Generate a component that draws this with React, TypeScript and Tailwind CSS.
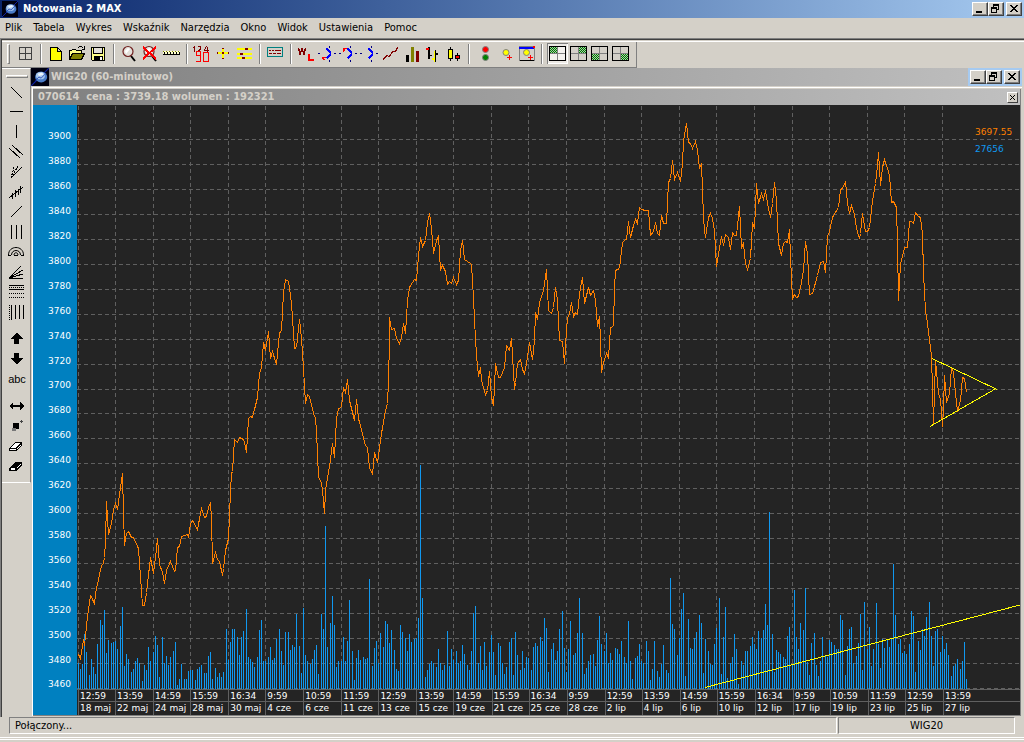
import type { ReactNode } from 'react';
import clsx from 'clsx';

const MENU = ['Plik', 'Tabela', 'Wykres', 'Wskaźnik', 'Narzędzia', 'Okno', 'Widok', 'Ustawienia', 'Pomoc'];

// plot canvas
const LEFT = 77;
const TOP = 105;
const WIDTH = 943;
const HEIGHT = 584;
const BASE = 689;

const BARS_PER_TICK = 17;
const TICKS = [
  ['12:59', '18 maj'], ['13:59', '22 maj'], ['14:59', '24 maj'], ['15:59', '28 maj'],
  ['16:34', '30 maj'], ['9:59', '4 cze'], ['10:59', '6 cze'], ['11:59', '11 cze'],
  ['12:59', '13 cze'], ['13:59', '15 cze'], ['14:59', '19 cze'], ['15:59', '21 cze'],
  ['16:34', '25 cze'], ['9:59', '28 cze'], ['12:59', '2 lip'], ['13:59', '4 lip'],
  ['14:59', '6 lip'], ['15:59', '10 lip'], ['16:34', '12 lip'], ['9:59', '17 lip'],
  ['10:59', '19 lip'], ['11:59', '23 lip'], ['12:59', '25 lip'], ['13:59', '27 lip'],
];

const barX = (i: number) => 78 + Math.floor((i * 42) / 19);
const TICK_X = TICKS.map((_, i) => barX(i * BARS_PER_TICK));
const LEVELS = Array.from({ length: 23 }, (_, i) => ({
  price: 3900 - i * 20,
  y: i < 11 ? 139 + i * 25 : 138 + i * 25,
}));

const VOLUME = [
  26, 20, 25, 55, 37, 14, 30, 22, 15, 45, 69, 64, 79, 36, 49, 46, 47,
  48, 40, 63, 82, 23, 35, 30, 17, 20, 28, 31, 26, 8, 24, 19, 42, 28,
  37, 53, 44, 12, 52, 26, 33, 24, 32, 38, 47, 4, 10, 25, 10, 10, 18,
  19, 19, 9, 20, 22, 24, 16, 16, 33, 37, 10, 21, 12, 16, 12, 17, 60,
  29, 47, 60, 60, 52, 34, 52, 58, 80, 32, 30, 27, 22, 32, 59, 69, 28,
  28, 32, 42, 29, 31, 50, 60, 38, 24, 57, 57, 39, 44, 42, 75, 43, 16,
  81, 34, 28, 25, 30, 39, 44, 15, 75, 60, 163, 42, 66, 93, 64, 22, 28,
  28, 52, 28, 48, 89, 38, 9, 31, 39, 29, 32, 30, 31, 110, 23, 41, 48,
  26, 56, 42, 68, 65, 46, 59, 39, 20, 18, 64, 57, 51, 38, 55, 47, 50,
  51, 71, 224, 91, 12, 19, 25, 28, 26, 22, 40, 26, 19, 24, 58, 23, 40,
  29, 38, 26, 28, 44, 35, 24, 19, 38, 76, 83, 26, 43, 19, 47, 23, 37,
  54, 37, 14, 46, 43, 26, 15, 22, 47, 51, 14, 57, 34, 19, 38, 21, 32,
  31, 19, 42, 46, 43, 52, 48, 71, 61, 17, 40, 46, 29, 38, 60, 78, 41,
  17, 40, 68, 34, 36, 56, 91, 56, 15, 21, 28, 34, 35, 23, 49, 73, 45,
  38, 56, 26, 36, 29, 41, 40, 35, 48, 32, 26, 68, 28, 10, 31, 33, 45,
  28, 26, 48, 38, 9, 20, 48, 18, 12, 25, 44, 19, 16, 111, 65, 60, 34,
  51, 80, 96, 13, 70, 41, 40, 51, 57, 74, 66, 16, 50, 38, 25, 24, 45,
  61, 91, 15, 52, 82, 11, 26, 32, 55, 40, 5, 28, 24, 38, 38, 43, 52,
  45, 40, 58, 51, 59, 85, 64, 177, 55, 17, 39, 37, 35, 32, 30, 53, 62,
  24, 99, 52, 40, 66, 59, 101, 27, 14, 46, 56, 24, 13, 28, 52, 33, 32,
  49, 47, 44, 40, 40, 74, 69, 14, 43, 60, 62, 26, 33, 46, 75, 19, 87,
  40, 62, 23, 40, 86, 45, 21, 50, 41, 49, 42, 50, 125, 74, 45, 50, 36,
  38, 35, 45, 78, 73, 17, 48, 39, 60, 53, 72, 87, 53, 23, 58, 60, 37,
  53, 40, 46, 34, 13, 23, 25, 30, 20, 28, 47, 10,
];

const PRICE =
  '78,654 80,658 83,639 84,645 87,616 90,595 91,596 94,604 95,593 101,565 103,563 104,557 105,540 106,501 108,534 111,523 113,509 115,503 117,509 120,487 122,473 123,512 124,545 126,533 128,531 131,537 133,537 138,548 139,562 142,605 144,605 146,592 150,557 153,573 155,557 157,538 159,564 162,572 164,583 166,570 170,561 174,571 175,570 177,547 179,546 181,536 184,535 187,534 188,537 190,523 192,520 197,529 201,508 204,517 206,516 208,507 210,502 211,518 212,563 215,552 217,559 219,561 222,575 223,568 225,550 228,538 229,515 ' +
  '230,490 231,473 232,471 234,439 237,442 239,437 243,439 245,446 246,452 248,418 250,416 252,417 257,397 259,373 261,367 263,342 265,350 268,331 270,358 272,351 276,364 279,332 281,331 283,292 285,279 288,281 289,287 291,303 294,348 296,347 299,319 301,338 303,368 305,403 307,394 309,396 313,413 315,418 316,430 318,477 321,482 322,490 324,513 325,490 327,477 329,466 332,443 334,457 336,418 338,408 341,407 343,387 345,392 347,379 349,400 354,420 356,399 358,418 365,445 367,447 369,467 372,474 374,452 377,462 378,455 381,433 385,410 387,403 388,380 389,340 389,317 391,329 394,328 396,338 399,343 401,337 403,323 405,333 407,300 409,287 412,282 414,279 416,280 418,255 420,237 422,246 425,240 427,222 429,213 431,228 433,253 436,240 438,236 440,269 442,265 445,271 447,284 449,281 451,283 453,277 456,284 458,280 460,250 462,240 464,259 467,261 470,263 471,264 473,297 474,320 476,355 478,376 480,367 481,380 485,394 487,390 489,371 491,397 493,405 494,387 495,363 498,377 500,377 504,367 506,345 509,350 511,338 514,389 515,382 517,363 ' +
  '520,359 522,369 524,373 526,363 529,342 532,359 534,340 535,312 537,319 539,302 543,290 546,269 548,310 551,313 553,307 555,287 557,300 559,340 562,341 564,363 566,330 567,318 569,313 571,302 573,316 575,312 577,314 579,293 582,277 584,303 588,287 590,295 593,290 595,300 597,326 599,316 600,340 601,372 603,362 606,353 608,357 610,327 613,326 614,287 615,270 619,268 622,242 625,239 626,239 628,221 630,237 633,225 635,219 637,223 639,207 641,209 645,210 648,210 650,235 653,231 655,222 657,233 659,235 661,215 663,223 666,223 668,182 670,178 672,160 674,179 677,172 680,181 682,163 683,140 686,123 688,142 690,143 692,148 695,141 697,150 699,168 701,163 703,217 704,230 705,237 708,217 710,213 712,218 714,230 716,266 718,253 721,236 723,245 725,234 728,237 730,249 732,232 734,235 736,235 739,206 741,247 743,243 745,263 747,269 750,258 752,223 754,227 755,207 ' +
  '756,183 758,203 761,193 763,199 765,190 767,203 770,217 772,203 774,182 776,200 778,243 781,255 783,243 785,241 787,242 789,229 790,257 792,298 794,294 796,297 798,296 801,282 803,270 805,241 807,253 809,294 812,293 817,275 820,262 823,261 825,272 827,236 829,231 832,217 838,207 840,189 842,188 845,181 847,203 849,213 851,205 854,214 856,228 859,238 860,233 862,213 865,231 867,231 869,227 872,200 875,183 877,165 878,152 879,168 880,185 882,167 884,159 887,168 889,175 891,202 893,201 896,207 897,243 898,300 900,264 904,247 907,247 909,221 911,221 913,223 915,212 918,216 920,217 922,234 923,273 925,310 927,323 931,355 933,423 935,360 938,393 940,399 942,426 943,407 944,375 946,402 949,393 951,367 953,372 955,393 957,411 960,400 962,377 964,378 966,392';

function Chart() {
  return (
    <svg
      viewBox={`${LEFT} ${TOP} ${WIDTH} ${HEIGHT}`}
      preserveAspectRatio="none"
      shapeRendering="crispEdges"
      className="block h-[584px] w-full"
      role="img"
      aria-label="WIG20"
    >
      <g stroke="#606060" strokeDasharray="4 3" fill="none">
        {TICK_X.map((x) => <path key={x} d={`M${x + 0.5} ${TOP + 1}V${BASE}`} />)}
        {LEVELS.map(({ y }) => <path key={y} d={`M${LEFT} ${y + 0.5}H${LEFT + WIDTH}`} />)}
      </g>
      <g fill="#1098f0">
        {VOLUME.map((v, i) => <rect key={i} x={barX(i)} y={BASE - v} width="1" height={v} />)}
      </g>
      <polyline points={PRICE} transform="translate(.5 .5)" fill="none" stroke="#ff8000" />
      <g stroke="#ff0" fill="none">
        <path d="M932 358.5L997 389.5M930 426.5L996 388.5" />
        <path d="M705 687.5L1020 605" />
      </g>
    </svg>
  );
}

function ChartPanel() {
  return (
    <div className="flex bg-[#242424] font-['DejaVu_Sans',sans-serif] text-[9px] text-white">
      <div className="flex w-11 shrink-0 flex-col bg-[#0080c0] pt-[19px]">
        {LEVELS.map(({ price, y }, i) => (
          <div
            key={price}
            className="flex items-center pl-[15px]"
            style={{ height: i + 1 < LEVELS.length ? LEVELS[i + 1].y - y : 24 }}
          >
            {price}
          </div>
        ))}
      </div>
      <div className="relative min-w-0 flex-1">
        <Chart />
        <div className="absolute top-[19px] right-[5px] w-10 leading-[17px]">
          <div className="text-[#ff8000]">3697.55</div>
          <div className="text-[#1098f0]">27656</div>
        </div>
        <div className="flex border-t border-[#606060] pl-px">
          {TICKS.map(([time, day], i) => (
            <div
              key={i}
              className="w-0 border-l border-[#606060] whitespace-nowrap"
              style={{ flexGrow: (TICK_X[i + 1] ?? LEFT + WIDTH) - TICK_X[i] }}
            >
              <div className="h-3 border-b border-[#606060] pl-px leading-[12px]">{time}</div>
              <div className="h-[13px] pl-px leading-[13px]">{day}</div>
            </div>
          ))}
        </div>
      </div>
    </div>
  );
}

function AppIcon({ className }: { className: string }) {
  return (
    <svg viewBox="0 0 16 16" className={clsx('shrink-0', className)} aria-hidden="true">
      <path fill="#000010" d="M0 0h16v16H0z" />
      <path d="M0 16l6-6M11 5l5-5" stroke="#1020a0" />
      <ellipse cx="9" cy="8" rx="5.4" ry="4.8" fill="#4a7cc8" />
      <ellipse cx="8.4" cy="6.8" rx="4" ry="3.2" fill="#a8c8ec" />
      <path d="M6 5l4-1 1 2-4 1z" fill="#eef6ff" />
      <path d="M4 11l3-3 2 1 4-4" fill="none" stroke="#2848b8" strokeWidth="0.8" />
    </svg>
  );
}

function WinButton({ label, children, className }: { label: string; children: ReactNode; className?: string }) {
  return (
    <button
      aria-label={label}
      className={clsx(
        'h-[14px] w-4 border border-t-white border-r-[#404040] border-b-[#404040] border-l-white bg-[#d4d0c8] shadow-[inset_-1px_-1px_0_#808080]',
        className,
      )}
    >
      <svg viewBox="0 0 14 12" className="block h-3 w-full" shapeRendering="crispEdges">
        {children}
      </svg>
    </button>
  );
}

function WinButtons() {
  return (
    <div className="flex">
      <WinButton label="Minimalizuj"><path d="M3 8h6v2H3z" /></WinButton>
      <WinButton label="Przywróć">
        <path d="M4 1h6v2H4zM4 3h1v1H4zM9 3h1v4H9zM8 6h1v1H8zM2 4h6v2H2zM2 6h1v4H2zM7 6h1v4H7zM2 9h6v1H2z" />
      </WinButton>
      <WinButton label="Zamknij" className="ml-0.5">
        <path d="M3 2h2v1h1v1h2V3h1V2h2v1h-1v1H9v1H8v1h1v1h1v1h1v1H9V8H8V7H6v1H5v1H3V8h1V7h1V6h1V5H5V4H4V3H3z" />
      </WinButton>
    </div>
  );
}

function Grid4({ x = 0, y = 0, pressed = false }: { x?: number; y?: number; pressed?: boolean }) {
  return (
    <>
      <path d="M3 4h15v13H3z" fill={pressed ? '#f4f2ee' : 'none'} />
      <path d={`M${3 + x} ${4 + y}h7v6h-7z`} fill="url(#check)" />
      <path d="M10.5 4v13M3 10.5h15" stroke="#808080" />
      <path d="M2.5 3.5h16v14h-16z" fill="none" stroke="#000" />
    </>
  );
}

const Glass = () => (
  <g shapeRendering="auto">
    <path d="M12 13l4 5" stroke="#000" strokeWidth="2" />
    <circle cx="9" cy="8.5" r="5" fill="#e4e0da" stroke="#702020" strokeWidth="1.2" />
    <path d="M6 8l3-3 2 1-4 5z" fill="#fff" />
  </g>
);

const Chevron = () => (
  <>
    <path d="M9.5 5.5l4 4v2l-4 4" fill="none" stroke="#00f" strokeWidth="1.5" />
    <path d="M1 10h2v1H1zM17 10h2v1h-2zM12 3h1v2h-1zM12 17h1v2h-1z" fill="#000080" />
  </>
);

type Tool = { name: string; icon: ReactNode; on?: boolean };

const TOOL_GROUPS: Tool[][] = [
  [{ name: 'Układ okien', icon: <path d="M4.5 4.5h12v12h-12zM10.5 4v13M4 10.5h13" fill="none" stroke="#404040" /> }],
  [
    { name: 'Nowy', icon: <path d="M4.5 4.5h7l4 4v9h-11zM11.5 4.5v4h4" fill="#ff0" stroke="#000" /> },
    {
      name: 'Otwórz',
      icon: (
        <>
          <path d="M2.5 16.5v-9h2l1-1h3l1 1h5v3" fill="#ff8" stroke="#000" />
          <path d="M2.5 16.5l3-6h12l-3 6z" fill="#808000" stroke="#000" />
          <path d="M10.5 5.5l2-2h2l2 2M17.5 3v3h-3" fill="none" stroke="#000" />
        </>
      ),
    },
    {
      name: 'Zapisz',
      icon: (
        <>
          <path d="M3.5 4.5h13v13h-12l-1-1z" fill="#ff8" stroke="#000" />
          <path d="M5.5 4.5h9v6h-9z" fill="#e4e0d8" stroke="#000" />
          <path d="M6 13h9v5H6z" />
          <path d="M12 14h2v3h-2z" fill="#fff" />
        </>
      ),
    },
  ],
  [
    { name: 'Lupa', icon: <Glass /> },
    { name: 'Usuń powiększenie', icon: <><Glass /><path d="M3 4l13 12M16 4L3 16" stroke="#f00" strokeWidth="2" /></> },
    {
      name: 'Linijka',
      icon: (
        <>
          <path d="M2 8h17v3H2z" fill="#ffc" />
          <path d="M2 8h1v1H2zM5 8h1v1H5zM8 8h1v1H8zM11 8h1v1h-1zM14 8h1v1h-1zM17 8h1v1h-1z" fill="#808000" />
          <path d="M2 11h17v1H2zM3 9h1v2H3zM6 9h1v2H6zM9 9h1v2H9zM12 9h1v2h-1zM15 9h1v2h-1zM18 9h1v2h-1z" />
        </>
      ),
    },
  ],
  [
    {
      name: 'Wartości',
      icon: (
        <>
          <path d="M2.5 3v6M1 4.5h2M6 3.5h2.5V6L6 8.5h3M14.5 3l-2 4h4M15.5 4v5" fill="none" stroke="#800000" />
          <path d="M8.5 12.5h-4v-4h4v10h-4v-1M11.5 9.5h5v9h-5z" fill="none" stroke="#f00" />
        </>
      ),
    },
    {
      name: 'Kursor',
      icon: (
        <>
          <path d="M9 5h2v4h5v2h-5v5H9v-5H4V9h5z" fill="#ff0" />
          <path d="M9 5h2v1H9zM9 15h2v1H9zM4 9h1v2H4zM15 9h1v2h-1zM9 9h2v2H9z" fill="#800000" />
        </>
      ),
    },
    {
      name: 'Parametry',
      icon: (
        <>
          <path d="M3 5h15v2H3zM3 10h15v2H3zM3 14h15v2H3z" fill="#ff0" />
          <path d="M11 5h3v2h-3zM6 10h3v2H6zM8 14h3v2H8z" fill="#800000" />
        </>
      ),
    },
  ],
  [
    {
      name: 'Tabela notowań',
      icon: (
        <>
          <path d="M2.5 4.5h15v9h-15z" fill="none" stroke="#008080" />
          <path d="M4 7h2v1H4zM7 7h2v1H7zM10 7h6v1h-6zM4 10h3v1H4zM8 10h3v1H8zM12 10h4v1h-4z" fill="#800000" />
        </>
      ),
    },
  ],
  [
    {
      name: 'Wykres liniowy logarytmiczny',
      icon: (
        <>
          <path d="M2.5 5l1.5 6 2-5 2 5 1.5-6" fill="none" stroke="#800000" strokeWidth="1.6" />
          <path d="M13 11v6h5" fill="none" stroke="#f00" strokeWidth="2" />
        </>
      ),
    },
    { name: 'Zwrot w dół', icon: <><Chevron /><path d="M5 14h4v1H7v1h1v1H6v-1H5z" fill="#f00" /></> },
    { name: 'Zwrot w górę', icon: <><Chevron /><path d="M5 5h4v1H7v2H6v1H5z" fill="#f00" /></> },
    { name: 'Zwrot', icon: <Chevron /> },
    { name: 'Linia', icon: <path d="M3 17l4-5 2 2 4-6 2 1 3-5" fill="none" stroke="#800000" strokeWidth="1.3" /> },
    {
      name: 'Słupki',
      icon: (
        <>
          <path d="M5 12h3v7H5z" />
          <path d="M10 4h3v15h-3z" fill="#808000" />
          <path d="M15 8h3v11h-3z" fill="#800000" />
        </>
      ),
    },
    {
      name: 'OHLC',
      icon: (
        <>
          <path d="M6 4h2v12H6zM8 12h2v1H8zM13 7h1v12h-1zM14 10h2v2h-2z" />
          <path d="M4 5h3v2H4z" fill="#f00" />
          <path d="M12 8h1v11h-1zM10 15h2v2h-2z" fill="#ff0" />
        </>
      ),
    },
    {
      name: 'Świece',
      icon: (
        <>
          <path d="M7 4h1v14H7zM14 10h1v8h-1z" />
          <path d="M5.5 6.5h4v9h-4z" fill="#ff0" stroke="#000" />
          <path d="M12.5 12.5h4v3h-4z" fill="#f00" stroke="#000" />
        </>
      ),
    },
  ],
  [
    {
      name: 'Sygnały',
      icon: (
        <g shapeRendering="auto">
          <circle cx="11.5" cy="6.5" r="3" fill="#f00" stroke="#808080" />
          <circle cx="11.5" cy="14.5" r="3" fill="#008000" stroke="#808080" />
        </g>
      ),
    },
    {
      name: 'Dodaj alert',
      icon: (
        <>
          <circle cx="11" cy="9.5" r="3" fill="#ff0" stroke="#808080" shapeRendering="auto" />
          <path d="M14.5 12v5M12 14.5h5" stroke="#f00" />
        </>
      ),
    },
    {
      name: 'Okno alertów',
      icon: (
        <>
          <path d="M3.5 3.5h15v14h-15z" fill="#d4d0c8" stroke="#808080" />
          <path d="M3 4h15v2H3z" fill="#00f" />
          <path d="M17 3h2v2h-2z" fill="#f00" />
          <path d="M4 17h14v1H4z" />
          <circle cx="10.5" cy="9.5" r="3" fill="#ff0" stroke="#808080" shapeRendering="auto" />
          <path d="M14.5 12v5M12 14.5h5" stroke="#f00" />
        </>
      ),
    },
  ],
  [
    { name: 'Lewe górne', icon: <Grid4 pressed />, on: true },
    { name: 'Prawe górne', icon: <Grid4 x={8} /> },
    { name: 'Lewe dolne', icon: <Grid4 y={7} /> },
    { name: 'Prawe dolne', icon: <Grid4 x={8} y={7} /> },
  ],
];

function ToolBar() {
  return (
    <div className="flex h-[26px] w-fit items-center border-r border-b border-[#808080] pr-[5px] pb-0.5 pl-[5px]">
      <div className="mr-[5px] h-5 w-[3px] border border-t-white border-r-[#808080] border-b-[#808080] border-l-white" />
      {TOOL_GROUPS.map((group, g) => (
        <div key={g} className="flex items-center">
          {g > 0 && <div className="mx-1 h-5 w-0.5 border-r border-l border-r-white border-l-[#808080]" />}
          {group.map((tool) => (
            <button
              key={tool.name}
              aria-label={tool.name}
              aria-pressed={tool.on}
              className={clsx('h-[21px] w-[21px]', tool.on && 'bg-[#ece9e4] shadow-[inset_1px_1px_0_#808080,inset_-1px_-1px_0_#fff]')}
            >
              <svg viewBox="0 0 21 21" className="block h-[21px] w-[21px]" shapeRendering="crispEdges">{tool.icon}</svg>
            </button>
          ))}
        </div>
      ))}
    </div>
  );
}

const line = (d: string, dash?: string) => <path d={d} fill="none" stroke="#000" strokeDasharray={dash} />;

const DRAW_GROUPS: Tool[][] = [
  [
    { name: 'Linia trendu', icon: line('M4 5l11 11') },
    { name: 'Linia pozioma', icon: line('M3 9.5h13') },
    { name: 'Linia pionowa', icon: line('M9.5 3v13') },
    { name: 'Kanał', icon: line('M2 6l11 10M5 3l11 10') },
    { name: 'Wachlarz', icon: <>{line('M4 16L15 5')}{line('M4 16L7 5M4 16L11 4', '2 1')}</> },
    { name: 'Regresja', icon: line('M2 16L16 5M5.5 11v6M8.5 8v7M11.5 7v6M13.5 4v7') },
    { name: 'Odcinek', icon: line('M4 15L15 4') },
    { name: 'Cykle', icon: line('M4.5 3v14M9.5 3v14M14.5 3v14') },
    {
      name: 'Łuki',
      icon: (
        <g shapeRendering="auto">
          {line('M1.5 13c0-10 15-10 15 0M4.5 13c0-6 9-6 9 0M7 13c0-3 4-3 4 0M1 13.5h3M7 13.5h4M14 13.5h3')}
        </g>
      ),
    },
    { name: 'Promienie', icon: line('M2 16L14 4M2 16L16 8M2 16L16 12M2 16h14') },
    { name: 'Fibonacci', icon: <>{line('M2 3.5h15M2 7.5h15')}{line('M2 5.5h15M2 11.5h15M2 15.5h15', '1 1')}</> },
    { name: 'Strefy czasu', icon: <>{line('M4.5 3v15M8.5 3v14M12.5 3v14M16.5 3v14')}{line('M2.5 3v15', '1 1')}</> },
  ],
  [
    { name: 'Strzałka w górę', icon: <path d="M9 4h1l6 6h-4v5H7v-5H3z" /> },
    { name: 'Strzałka w dół', icon: <path d="M7 4h5v5h4l-6 6H9L3 9h4z" /> },
    { name: 'abc', icon: null },
  ],
  [
    { name: 'Przesuń poziomo', icon: <path d="M2 10l4-4v3h7V6l4 4-4 4v-3H6v3z" /> },
    { name: 'Przesuń', icon: <><path d="M6 7h6v6h-3l-3 2z" /><path d="M5 12h4v3H5z" fill="#777" /><path d="M14 4h1v3h-1zM13 5h3v1h-3z" fill="#444" /></> },
    {
      name: 'Gumka',
      icon: (
        <>
          <path d="M2.5 12.5l6-6h6v3l-5 5h-7z" fill="#fff" stroke="#000" />
          <path d="M3 12.5h6l5-5M9.5 12v3" stroke="#000" fill="none" />
        </>
      ),
    },
    {
      name: 'Usuń wszystko',
      icon: (
        <>
          <path d="M2.5 12.5l6-6h6v3l-5 5h-7z" stroke="#000" />
          <path d="M4 12h4v2H4z" fill="#fff" />
          <path d="M10 12l4-4" stroke="#fff" />
        </>
      ),
    },
  ],
];

function DrawBar() {
  return (
    <div className="flex h-[415px] w-[29px] shrink-0 flex-col items-center border-t border-r border-b border-t-white border-r-[#808080] border-b-white pt-[6px] pl-0.5">
      <div className="mb-1 h-[3px] w-[22px] border border-t-white border-r-[#808080] border-b-[#808080] border-l-white" />
      {DRAW_GROUPS.map((group, g) => (
        <div key={g} className={clsx('flex flex-col', g > 0 && 'mt-[7px]')}>
          {group.map((tool) => (
            <button key={tool.name} aria-label={tool.name} className="h-5 w-5 text-[11px] leading-5">
              {tool.icon ? (
                <svg viewBox="0 0 20 20" className="block h-5 w-5" shapeRendering="crispEdges">{tool.icon}</svg>
              ) : (
                <span className="font-['Liberation_Sans',sans-serif]">{tool.name}</span>
              )}
            </button>
          ))}
        </div>
      ))}
    </div>
  );
}

export default function App() {
  return (
    <div className="min-h-screen bg-[#d4d0c8] font-['DejaVu_Sans_Condensed','DejaVu_Sans',sans-serif] text-[11px] text-black">
      <svg className="absolute h-0 w-0" aria-hidden="true">
        <pattern id="check" width="2" height="2" patternUnits="userSpaceOnUse">
          <path d="M0 0h2v2H0z" fill="#a8cca8" />
          <path d="M0 0h1v1H0zM1 1h1v1H1z" fill="#007800" />
        </pattern>
      </svg>

      <header className="flex h-[18px] items-center bg-linear-to-r from-[#0a246a] to-[#a6caf0] pr-0.5 pl-0.5">
        <AppIcon className="h-4 w-4" />
        <h1 className="ml-[5px] flex-1 font-bold text-white">Notowania 2 MAX</h1>
        <WinButtons />
      </header>

      <nav className="flex h-5 items-center gap-[11px] pl-[5px]">
        {MENU.map((item) => <button key={item}>{item}</button>)}
      </nav>

      <div className="border-t border-l border-[#808080]">
        <div className="border-t border-l border-[#404040] pt-px">
          <div className="border-t border-white">
            <ToolBar />
          </div>
          <div className="flex items-start pb-px">
            <DrawBar />
            <main className="min-w-0 flex-1 pr-0.5">
              <div className="flex h-[18px] items-center bg-linear-to-r from-[#808080] to-[#c0c0c0]">
                <AppIcon className="h-[18px] w-[18px]" />
                <h2 className="ml-0.5 flex-1 font-bold text-[#d4d0c8]">WIG20 (60-minutowo)</h2>
                <div className="flex h-full items-center bg-[#a6caf0] px-0.5">
                  <WinButtons />
                </div>
              </div>
              <div className="mt-px ml-px border-t border-l border-white">
                <div className="mt-px mr-px border-r border-b border-[#808080]">
                  <div className="flex h-4 items-center bg-linear-to-r from-[#808080] to-[#c0c0c0] pr-0.5 pl-[5px]">
                    <p className="flex-1 font-bold whitespace-pre text-[#d4d0c8]">070614  cena : 3739.18 wolumen : 192321</p>
                    <button
                      aria-label="Zamknij panel"
                      className="h-[11px] w-[11px] border border-t-white border-r-[#404040] border-b-[#404040] border-l-white bg-[#d4d0c8]"
                    >
                      <svg viewBox="0 0 9 9" className="block h-[9px] w-[9px]" shapeRendering="crispEdges">
                        <path d="M2 2l5 5M7 2L2 7" stroke="#000" />
                      </svg>
                    </button>
                  </div>
                  <ChartPanel />
                </div>
              </div>
            </main>
          </div>
        </div>
      </div>

      <footer className="border-b border-white pb-[3px]">
        <div className="flex h-[17px] gap-px pr-[9px] pl-[9px] leading-4">
          <div className="flex-1 border border-t-[#808080] border-r-white border-b-white border-l-[#808080] pl-[5px]">Połączony...</div>
          <div className="w-[177px] border border-t-[#808080] border-r-white border-b-white border-l-[#808080] text-center">WIG20</div>
        </div>
      </footer>
      <div className="mt-px border-t border-white" />
    </div>
  );
}
